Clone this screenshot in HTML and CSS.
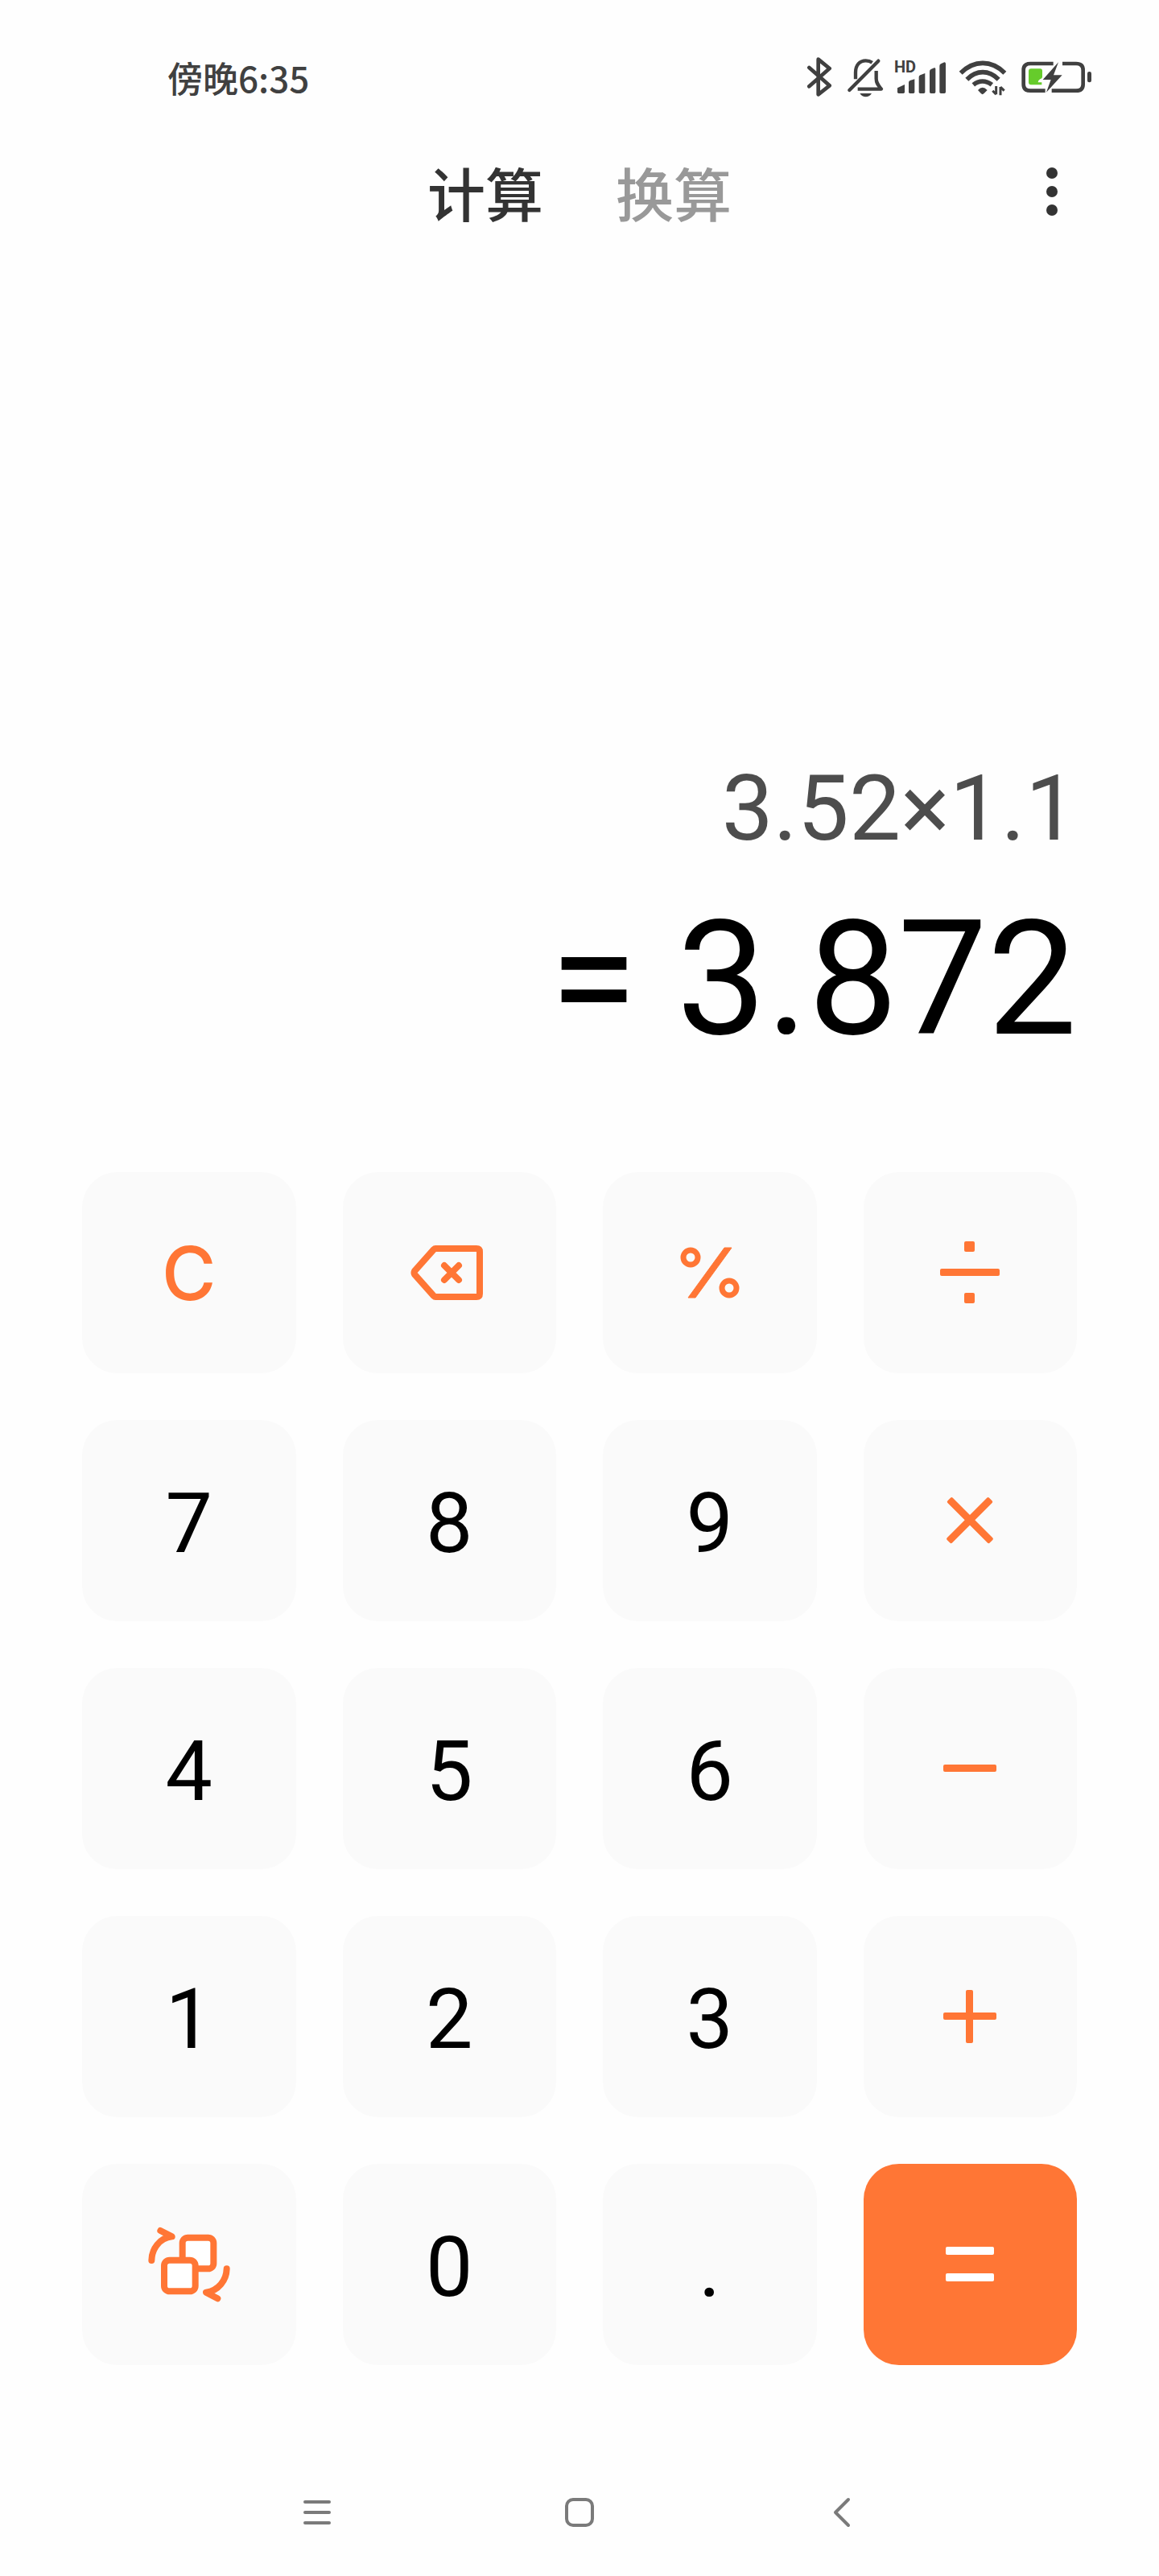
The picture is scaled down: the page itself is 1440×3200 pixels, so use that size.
FILE: index.html
```html
<!DOCTYPE html>
<html lang="zh-CN">
<head>
    <meta charset="UTF-8">
    <meta name="viewport" content="width=device-width, initial-scale=1.0">
    <title>计算器</title>
    <link rel="stylesheet" href="styles.css">
</head>
<body>
    <div class="status-bar">
        <span class="time">傍晚6:35</span>
        <div class="status-icons">
            <!-- bluetooth -->
            <svg width="33" height="56" viewBox="66 56 99 168" fill="none" stroke="#404040" stroke-width="14" stroke-linecap="round" stroke-linejoin="round">
                <path d="M76 104L152 171L110 204V73L152 107L76 174"/>
            </svg>
            <!-- muted bell -->
            <svg width="46" height="56" viewBox="213 56 138 168" fill="none" stroke="#404040" stroke-width="13" stroke-linecap="round" stroke-linejoin="round">
                <path d="M226 188L334 79"/>
                <path d="M249 147V122C249 94 265 78 287 78C296 78 304 80 311 85" stroke-linecap="butt"/>
                <path d="M326 116V145C326 162 334 170 345 184H257" stroke-linecap="butt"/>
                <path d="M265 200H309C303 209 296 213 287 213S271 209 265 200Z" fill="#404040" stroke="none"/>
            </svg>
            <!-- signal -->
            <svg width="63" height="56" viewBox="399 56 189 168" fill="#404040">
                <text class="hd" x="393" y="123">HD</text>
                <path d="M405 180L432 167V195Q432 200 427 200H410Q405 200 405 195Z"/>
                <path d="M447 159Q447 154 452 152L469 147V195Q469 200 464 200H452Q447 200 447 195Z"/>
                <path d="M485 139Q485 134 490 132L508 125V195Q508 200 503 200H490Q485 200 485 195Z"/>
                <path d="M525 118Q525 112 530 110L542 105Q547 104 547 109V195Q547 200 542 200H530Q525 200 525 195Z"/>
                <path d="M562 98Q562 92 567 90L580 84Q585 84 585 89V195Q585 200 580 200H567Q562 200 562 195Z"/>
            </svg>
            <!-- wifi -->
            <svg width="59" height="56" viewBox="636 56 177 168" fill="none" stroke="#404040" stroke-width="17">
                <path d="M641 124Q678 87 723 87T805 124"/>
                <path d="M664 148Q691 121 723 121T782 148"/>
                <path d="M688 168Q704 155 722 155T757 168"/>
                <path d="M705 188Q722 168 740 188L727 201Q722 206 717 201Z" fill="#404040" stroke="none"/>
                <path d="M773 173V204M773 204L760 190M789 207V176M789 176L803 190" stroke-width="9"/>
            </svg>
            <!-- battery -->
            <svg width="90" height="56" viewBox="861 56 270 168">
                <path d="M986 89H901Q875 89 875 113V166Q875 190 901 190H956M1020 89H1071Q1097 89 1097 113V166Q1097 190 1071 190H980" fill="none" stroke="#404040" stroke-width="14"/>
                <rect x="1113" y="119" width="15" height="40" rx="7" fill="#404040"/>
                <path d="M903 108H937Q945 108 945 116V139Q945 144 937 147Q929 151 929 159H943V168H903Q894 168 894 159V117Q894 108 903 108Z" fill="#66cc2b"/>
                <path d="M1005 84L947 149H977L960 196L1019 132H987Z" fill="#404040"/>
            </svg>
        </div>
    </div>

    <header class="header">
        <nav class="tabs">
            <a href="#calc" class="tab active">计算</a>
            <a href="#convert" class="tab">换算</a>
        </nav>
        <button class="more" aria-label="更多">
            <svg width="14" height="60" viewBox="0 0 14 60" fill="#333">
                <circle cx="7" cy="7" r="7"/>
                <circle cx="7" cy="30" r="7"/>
                <circle cx="7" cy="53" r="7"/>
            </svg>
        </button>
    </header>

    <main class="calculator">
        <div class="display">
            <div class="expression">3.52×1.1</div>
            <div class="result">= 3.872</div>
        </div>

        <div class="keypad">
            <button class="key clear">C</button>
            <button class="key" aria-label="退格">
                <svg width="96" height="68" viewBox="0 0 96 68" fill="none" stroke="#ff7635" stroke-width="8" stroke-linecap="round" stroke-linejoin="round">
                    <path d="M31 4H82Q86 4 86 8V60Q86 64 82 64H31Q30 64 29 63L5 36Q4 34 5 32L29 5Q30 4 31 4Z"/>
                    <path d="M42 25L60 43M60 25L42 43"/>
                </svg>
            </button>
            <button class="key" aria-label="百分号">
                <svg width="74" height="64" viewBox="0 0 74 64" fill="none" stroke="#ff7635" stroke-width="7">
                    <circle cx="13" cy="13" r="9"/>
                    <circle cx="61" cy="51" r="9"/>
                    <path d="M55 1H64L19 63H10Z" fill="#ff7635" stroke-width="1" stroke-linejoin="round"/>
                </svg>
            </button>
            <button class="key" aria-label="除">
                <svg width="74" height="78" viewBox="0 0 74 78" fill="#ff7635">
                    <rect x="30" y="0" width="13" height="13" rx="2"/>
                    <rect x="0" y="34" width="74" height="9" rx="2"/>
                    <rect x="30" y="64" width="13" height="13" rx="2"/>
                </svg>
            </button>

            <button class="key digit">7</button>
            <button class="key digit">8</button>
            <button class="key digit">9</button>
            <button class="key" aria-label="乘">
                <svg width="58" height="58" viewBox="0 0 58 58" fill="#ff7635">
                    <rect x="-8" y="24" width="74" height="9" rx="2" transform="rotate(45 29 29)"/>
                    <rect x="-8" y="24" width="74" height="9" rx="2" transform="rotate(-45 29 29)"/>
                </svg>
            </button>

            <button class="key digit">4</button>
            <button class="key digit">5</button>
            <button class="key digit">6</button>
            <button class="key" aria-label="减">
                <svg width="66" height="66" viewBox="0 0 66 66" fill="#ff7635">
                    <rect x="0" y="28" width="66" height="9" rx="2"/>
                </svg>
            </button>

            <button class="key digit">1</button>
            <button class="key digit">2</button>
            <button class="key digit">3</button>
            <button class="key" aria-label="加">
                <svg width="66" height="66" viewBox="0 0 66 66" fill="#ff7635">
                    <rect x="0" y="28" width="66" height="9" rx="2"/>
                    <rect x="28" y="0" width="9" height="66" rx="2"/>
                </svg>
            </button>

            <button class="key" aria-label="切换">
                <svg width="102" height="94" viewBox="280 290 306 282" fill="none" stroke="#ff7635" stroke-width="24" stroke-linecap="round" stroke-linejoin="round">
                    <rect x="408" y="331" width="116" height="116" rx="20" fill="#fff"/>
                    <rect x="340" y="415" width="116" height="116" rx="20" fill="#fff"/>
                    <path d="M293 416C294 372 322 333 369 327L326 305"/>
                    <path d="M573 447C572 490 542 529 496 535L539 558"/>
                </svg>
            </button>
            <button class="key digit">0</button>
            <button class="key digit">.</button>
            <button class="key equals" aria-label="等于">
                <svg width="60" height="44" viewBox="0 0 60 44" fill="#fff">
                    <rect x="0" y="0" width="60" height="10" rx="2"/>
                    <rect x="0" y="33" width="60" height="10" rx="2"/>
                </svg>
            </button>
        </div>
    </main>

    <footer class="nav-bar">
        <button class="nav-button" aria-label="菜单">
            <svg width="34" height="36" viewBox="0 0 34 36" stroke="#7a7a7a" stroke-width="4" stroke-linecap="round">
                <path d="M2 5H32M2 18H32M2 31H32"/>
            </svg>
        </button>
        <button class="nav-button" aria-label="主页">
            <svg width="36" height="36" viewBox="0 0 36 36" fill="none" stroke="#7a7a7a" stroke-width="4">
                <rect x="2" y="2" width="32" height="32" rx="8"/>
            </svg>
        </button>
        <button class="nav-button" aria-label="返回">
            <svg width="20" height="36" viewBox="0 0 20 36" fill="none" stroke="#7a7a7a" stroke-width="4" stroke-linecap="round" stroke-linejoin="round">
                <path d="M18 2L2 18L18 34"/>
            </svg>
        </button>
    </footer>
</body>
</html>
```
FILE: styles.css
```css
* {
    box-sizing: border-box;
}

body {
    font-family: Roboto, "Noto Sans CJK SC", sans-serif;
    display: flex;
    flex-direction: column;
    min-height: 100vh;
    margin: 0;
    background-color: #fefefe;
}

button {
    border: none;
    padding: 0;
    background: none;
    font-family: inherit;
    cursor: pointer;
}

svg {
    display: block;
    overflow: visible;
}

.status-bar {
    display: flex;
    justify-content: space-between;
    align-items: center;
    padding: 66px 83px 0 208px;
}

.time {
    font-family: "Noto Sans CJK SC", sans-serif;
    font-size: 44px;
    font-weight: 500;
    line-height: 60px;
    color: #404040;
}

.status-icons {
    display: flex;
    gap: 16px;
}

.hd {
    font-size: 60px;
    font-weight: 700;
}

.header {
    display: grid;
    grid-template-columns: 1fr auto 1fr;
    align-items: center;
    padding: 62px 126px 0;
}

.tabs {
    grid-column: 2;
    display: flex;
    gap: 90px;
}

.tab {
    font-family: "Noto Sans CJK SC", sans-serif;
    font-size: 72px;
    font-weight: 500;
    line-height: 100px;
    color: #999;
    text-decoration: none;
}

.tab.active {
    color: #333;
}

.more {
    justify-self: end;
}

.calculator {
    flex: 1;
    display: flex;
    flex-direction: column;
    justify-content: flex-end;
    padding: 0 102px 104px;
}

.display {
    text-align: right;
    margin-bottom: 140px;
}

.expression {
    font-size: 114px;
    line-height: 140px;
    color: #4d4d4d;
}

.result {
    margin-top: 42px;
    font-size: 198px;
    line-height: 200px;
    color: #000;
}

.keypad {
    display: grid;
    grid-template-columns: repeat(4, 1fr);
    gap: 58px;
}

.key {
    display: flex;
    justify-content: center;
    align-items: center;
    height: 250px;
    border-radius: 44px;
    background-color: #fafafa;
    color: #000;
    font-size: 104px;
}

.key.digit {
    padding-top: 6px;
}

.key.clear {
    font-family: Inter, sans-serif;
    font-size: 92px;
    font-weight: 500;
    color: #ff7635;
}

.key.equals {
    background-color: #ff7635;
}

.nav-bar {
    display: flex;
    height: 158px;
    padding: 0 16%;
}

.nav-button {
    flex: 1;
    display: flex;
    justify-content: center;
    align-items: center;
}
```
